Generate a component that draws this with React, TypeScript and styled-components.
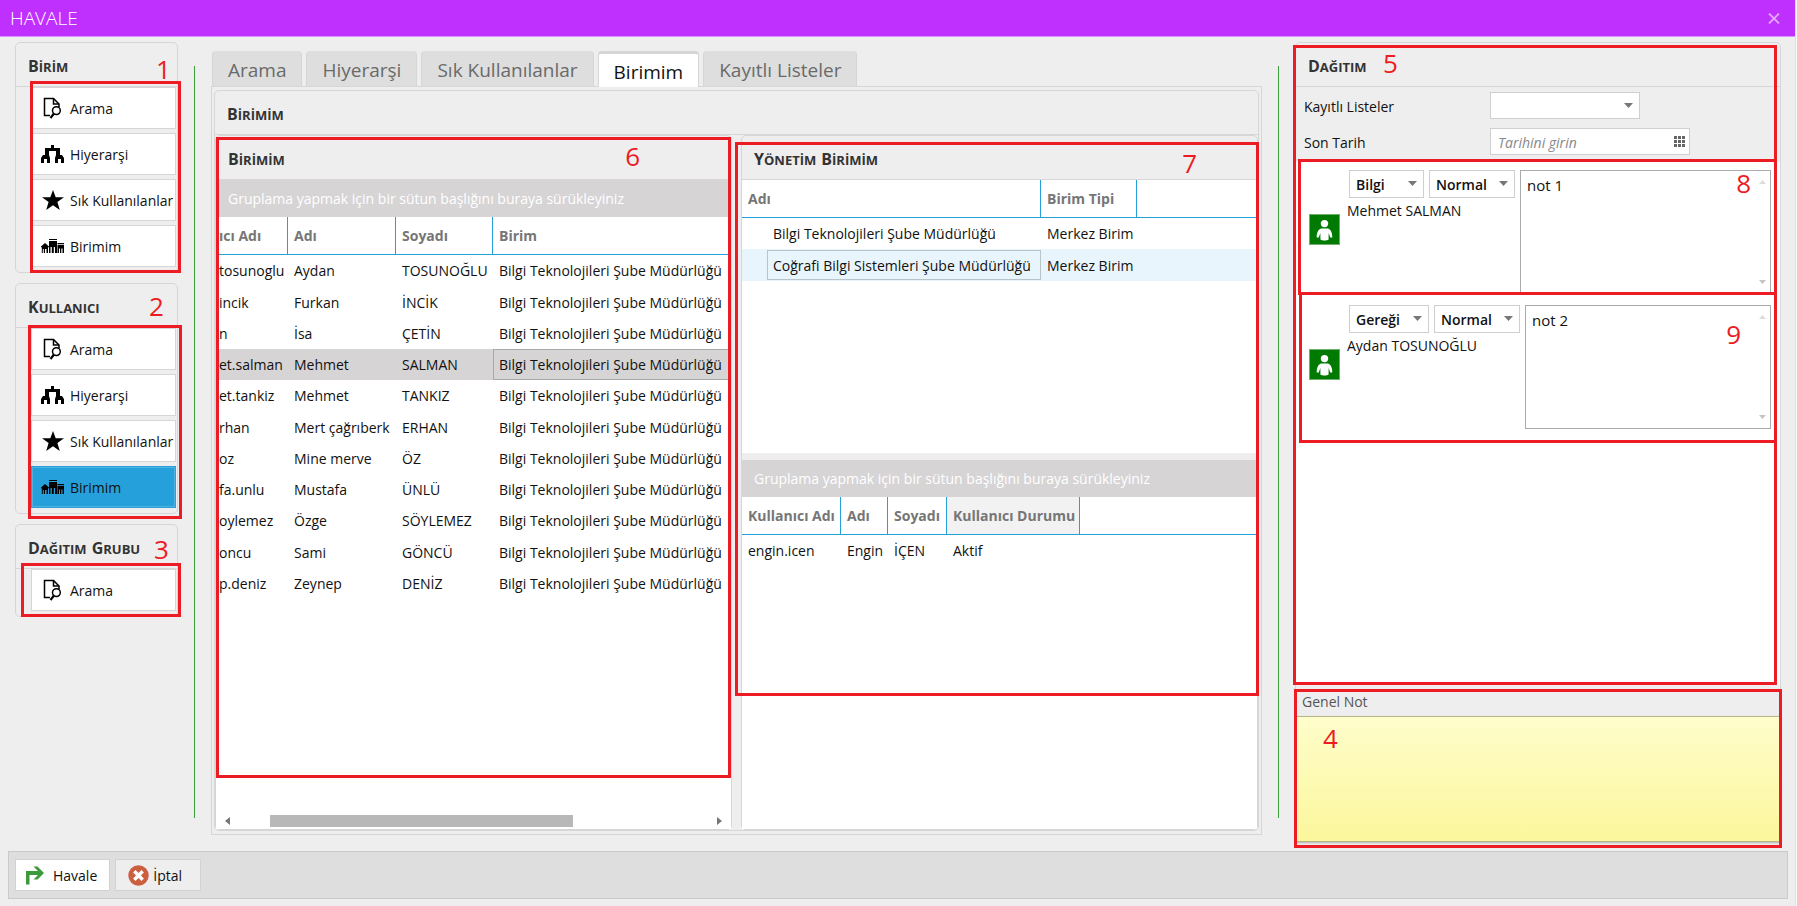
import React from 'react';
import styled, { createGlobalStyle } from 'styled-components';

const RED = '#ed1c24';
const LINE = '#d6d6d6';
const BLUE = '#26a0da';
const FONT = '"Open Sans", "Noto Sans", sans-serif';

const GlobalStyle = createGlobalStyle`
  *, *::before, *::after { box-sizing: border-box; }
  body { margin: 0; background: #fff; font-family: ${FONT}; font-size: 14px; color: #111; }
  button, input, select, textarea { font: inherit; color: inherit; margin: 0; border-radius: 0; }
`;

const Shell = styled.div`
  display: flex;
  min-height: 100vh;
`;

const WindowFrame = styled.div`
  flex: 1;
  min-width: 0;
  display: flex;
  flex-direction: column;
  background: #eeeeee;
`;

const DesktopEdge = styled.div`
  width: 2px;
  background: #fafafa;
  border-left: 1px solid #e0e0e0;
`;

const TitleBar = styled.header`
  display: flex;
  align-items: center;
  justify-content: space-between;
  height: 37px;
  padding: 0 15px 0 10px;
  background: #bf30ff;
  border-bottom: 1px solid #d795fb;
`;

const Title = styled.h1`
  margin: 0;
  font-size: 19px;
  font-weight: 300;
  color: #fff;
`;

const CloseButton = styled.button`
  display: flex;
  padding: 0;
  border: 0;
  background: none;
`;

const Main = styled.main`
  flex: 1;
  display: flex;
  padding: 0 14px 0 15px;
`;

const Divider = styled.div`
  width: 1px;
  margin: 29px 16px 33px;
  background: #3f9f3f;
`;

const Sidebar = styled.aside`
  width: 163px;
  padding-top: 5px;
  display: flex;
  flex-direction: column;
  gap: 10px;
`;

const Panel = styled.section<{ $grow?: boolean }>`
  position: relative;
  display: flex;
  flex-direction: column;
  min-width: 0;
  border: 1px solid ${LINE};
  border-radius: 5px;
  ${p => p.$grow && 'flex: 1;'}
`;

const TitleRow = styled.h2`
  flex: none;
  display: flex;
  align-items: center;
  gap: 5px;
  height: 44px;
  margin: 0;
  padding: 4px 12px 0;
  border-bottom: 1px solid ${LINE};
  font-size: 13px;
  line-height: 20px;
  font-weight: 700;
  white-space: nowrap;
  color: #333;
`;

const TitleWord = styled.span`
  display: block;
  text-transform: uppercase;
  &::first-letter { font-size: 16px; }
`;

const ButtonStack = styled.div`
  display: flex;
  flex-direction: column;
  gap: 4px;
  padding: 0 1px 5px 15px;
`;

const NavButton = styled.button<{ $active?: boolean }>`
  display: flex;
  align-items: center;
  height: 42px;
  padding: 0;
  border: 1px solid ${p => (p.$active ? BLUE : LINE)};
  background: ${p => (p.$active ? BLUE : '#fff')};
  box-shadow: ${p => (p.$active ? 'inset 0 0 0 1px #4fb2e2' : 'none')};
  white-space: nowrap;
`;

const NavIcon = styled.span`
  display: flex;
  justify-content: center;
  width: 23px;
  margin: 0 6px 0 9px;
`;

const CalloutBox = styled.div<{ $inset: string }>`
  position: absolute;
  z-index: 2;
  inset: ${p => p.$inset};
  border: 3px solid ${RED};
  pointer-events: none;
`;

const CalloutNumber = styled.span<{ $inset: string }>`
  position: absolute;
  z-index: 2;
  inset: ${p => p.$inset};
  font-size: 26px;
  line-height: 26px;
  color: ${RED};
  pointer-events: none;
`;

const Center = styled.div`
  flex: 1;
  min-width: 0;
  display: flex;
  flex-direction: column;
  padding: 14px 0 16px;
`;

const Tabs = styled.div`
  display: flex;
  gap: 4px;
  height: 35px;
  padding-left: 1px;
`;

const Tab = styled.button<{ $active?: boolean }>`
  position: relative;
  height: ${p => (p.$active ? '36px' : '35px')};
  padding: ${p => (p.$active ? '3px 15px 0' : '2px 15px 0')};
  border: 1px solid ${LINE};
  border-top: ${p => (p.$active ? '3px solid #d6d4d5' : '1px solid #dedede')};
  border-bottom: 0;
  border-radius: 4px 4px 0 0;
  background: ${p => (p.$active ? '#fff' : '#dedede')};
  color: ${p => (p.$active ? '#111' : '#6a6a6a')};
  font-size: 19px;
  line-height: 24px;
  white-space: nowrap;
`;

const TabBody = styled.div`
  flex: 1;
  display: flex;
  padding: 3px 2px;
  border: 1px solid ${LINE};
`;

const Split = styled.div`
  flex: 1;
  display: flex;
  gap: 9px;
`;

const GridPanel = styled(Panel)`
  flex: 517 1 0;
`;

const Surface = styled.div`
  flex: 1;
  display: flex;
  flex-direction: column;
  min-width: 0;
  background: #fff;
`;

const GroupBar = styled.div`
  display: flex;
  align-items: center;
  height: 37px;
  padding: 0 12px;
  background: #d6d4d5;
  color: #fff;
  white-space: nowrap;
`;

const Viewport = styled.div<{ $height?: number }>`
  overflow: hidden;
  ${p => (p.$height ? `height: ${p.$height}px;` : 'flex: 1;')}
`;

const Table = styled.table`
  width: 100%;
  border-collapse: separate;
  border-spacing: 0;
  table-layout: fixed;
  text-align: left;
  white-space: nowrap;
`;

const Th = styled.th<{ $plain?: boolean; $shaded?: boolean }>`
  height: 38px;
  padding: 0 0 0 6px;
  border-bottom: 1px solid ${BLUE};
  border-right: ${p => (p.$plain ? '0' : `1px solid ${BLUE}`)};
  background: ${p => (p.$shaded ? '#f2f2f2' : '#fff')};
  color: #767676;
  font-weight: 700;
`;

const Tr = styled.tr<{ $tint?: string }>`
  height: 31px;
  background: ${p => p.$tint || 'transparent'};
  &:nth-child(4n + 2) { height: 32px; }
`;

const Td = styled.td<{ $focus?: string }>`
  padding: 0 0 0 6px;
  box-shadow: ${p => (p.$focus ? `inset 0 0 0 1px ${p.$focus}` : 'none')};
`;

const ClippedTh = styled(Th)`
  padding-left: 3px;
`;

const ClippedTd = styled(Td)`
  padding-left: 3px;
`;

const TreeTd = styled(Td)<{ $boxed?: boolean }>`
  padding: 0 0 0 25px;
  height: 31px;
  span {
    display: flex;
    align-items: center;
    height: 30px;
    padding-left: 5px;
    border: 1px solid ${p => (p.$boxed ? '#b9c4ca' : 'transparent')};
  }
`;

const ScrollBar = styled.div`
  display: flex;
  align-items: center;
  height: 18px;
  padding: 0 9px;
  margin-bottom: -1px;
`;

const ScrollTrack = styled.div`
  flex: 1;
  display: flex;
  padding: 0 29% 0 8%;
`;

const ScrollThumb = styled.div`
  flex: 1;
  height: 12px;
  background: #b8b8b8;
`;

const Splitter = styled.div`
  height: 7px;
  background: #eee;
`;

const RightColumn = styled.div`
  width: 486px;
  display: flex;
  padding: 5px 0 8px;
`;

const Form = styled.div`
  display: grid;
  grid-template-columns: 186px 1fr;
  row-gap: 9px;
  padding: 5px 8px 7px;
  align-items: center;
`;

const FieldLabel = styled.label`
  line-height: 25px;
  padding-top: 2px;
`;

const SelectWrap = styled.span<{ $width: number }>`
  position: relative;
  display: flex;
  width: ${p => p.$width}px;
  svg { position: absolute; right: 7px; top: 11px; pointer-events: none; }
`;

const Select = styled.select<{ $bold?: boolean }>`
  appearance: none;
  width: 100%;
  height: ${p => (p.$bold ? '28px' : '27px')};
  padding: 0 6px;
  border: 1px solid #cfcfcf;
  background: #fff;
  outline: 0;
  font-weight: ${p => (p.$bold ? 600 : 400)};
`;

const DateField = styled.span`
  display: flex;
  align-items: center;
  width: 200px;
  height: 27px;
  padding-right: 4px;
  border: 1px solid #cfcfcf;
  background: #fff;
`;

const DateInput = styled.input`
  flex: 1;
  min-width: 0;
  padding: 2px 0 0 7px;
  border: 0;
  background: none;
  outline: 0;
  &::placeholder { color: #888; font-style: italic; opacity: 1; }
`;

const PlainIconButton = styled.button`
  display: flex;
  padding: 0;
  border: 0;
  background: none;
`;

const Recipients = styled.ul`
  flex: 1;
  margin: 0;
  padding: 0;
  list-style: none;
  background: #fff;
`;

const Recipient = styled.li`
  position: relative;
  display: flex;
  padding: 8px 9px 3px 13px;
`;

const Avatar = styled.span`
  display: flex;
  align-items: flex-end;
  justify-content: center;
  width: 31px;
  height: 31px;
  margin: 44px 9px 0 0;
  border: 1px solid #6fae6f;
  background: #007a00;
`;

const Selects = styled.div`
  display: flex;
  gap: 5px;
`;

const PersonName = styled.div`
  margin-left: -2px;
  line-height: 25px;
`;

const NoteWrap = styled.div`
  flex: 1;
  display: flex;
  position: relative;
  margin-left: 5px;
`;

const Note = styled.textarea`
  width: 100%;
  height: 124px;
  padding: 2px 6px;
  border: 1px solid #aaabae;
  background: #fff;
  outline: 0;
  resize: none;
  overflow: hidden;
  font-size: 15px;
  line-height: 24px;
`;

const NoteArrows = styled.span`
  position: absolute;
  top: 10px;
  right: 5px;
  bottom: 10px;
  display: flex;
  flex-direction: column;
  justify-content: space-between;
`;

const GeneralNote = styled.div`
  position: relative;
  display: flex;
  flex-direction: column;
`;

const GeneralLabel = styled.label`
  height: 31px;
  padding: 3px 6px 0;
  line-height: 28px;
  color: #555;
`;

const GeneralInput = styled.textarea`
  height: 126px;
  border: 1px solid #b9b78a;
  background: linear-gradient(#fffdcb, #fbf79c);
  box-shadow: 0 1px 2px #bbb;
  outline: 0;
  resize: none;
`;

const Footer = styled.footer`
  display: flex;
  gap: 5px;
  height: 48px;
  margin: 0 7px 7px 8px;
  padding: 7px 6px;
  border: 1px solid #cacaca;
  background: #dedede;
`;

const ActionButton = styled.button<{ $primary?: boolean }>`
  display: flex;
  align-items: center;
  gap: ${p => (p.$primary ? '9px' : '4px')};
  height: 32px;
  padding: ${p => (p.$primary ? '0 12px 0 10px' : '0 18px 0 12px')};
  border: 1px solid #d2d2d2;
  background: ${p => (p.$primary ? '#fff' : '#eee')};
`;

const SearchDocIcon = () => (
  <svg width="19" height="23" viewBox="0 0 19 23" fill="none" stroke="#000" strokeWidth="1.5">
    <path d="M7 18.5H1.5V1.5H10.5L16 7V10" />
    <path d="M10.5 1.5V7H16" />
    <circle cx="13.4" cy="13.6" r="3.9" />
    <path d="M10.8 16.8L7.5 21" strokeWidth="2.2" />
  </svg>
);

const HierarchyIcon = () => (
  <svg width="23" height="18" viewBox="0 0 23 18">
    <path d="M10 0H13V3H19V10H21L23 13V18H20V14H17V18H14V13L15 10V6H8V10L9 13V18H6V14H3V18H0V13L2 10H4V3H10Z" />
  </svg>
);

const StarIcon = () => (
  <svg width="22" height="20" viewBox="0 0 22 20">
    <path d="M11 0L13.7 7.3H22L15.4 12L17.8 20L11 15.2L4.2 20L6.6 12L0 7.3H8.3Z" />
  </svg>
);

const BuildingsIcon = () => (
  <svg width="23" height="14" viewBox="0 0 23 14">
    <path d="M0 7.5L4 4L8 7.5V8.5L7 8V14H5.5V10H4V14H2.8V10H1.8V14H0.8V8L0 8.5Z" />
    <path d="M8 0H16V1H8ZM8 2H16V14H14V8H12.8V14H10.8V8H9.5V14H8Z" />
    <path d="M16.5 4H23V5.2H16.5ZM16.5 6H23V14H21.5V9.5H20.3V14H19V9.5H18V14H16.5Z" />
  </svg>
);

const ForwardIcon = () => (
  <svg width="18" height="19" viewBox="0 0 18 19">
    <path d="M0 18.5V5H12L7.5 0.5H11.5L18 7L11.5 13.5H7.5L12 9H3.5V18.5Z" fill="#3d9a3a" />
  </svg>
);

const CancelIcon = () => (
  <svg width="21" height="21" viewBox="0 0 21 21">
    <circle cx="10.5" cy="10.5" r="10.2" fill="#cb5f3f" />
    <path d="M6.3 6.3L14.7 14.7M14.7 6.3L6.3 14.7" stroke="#fff" strokeWidth="3.4" />
  </svg>
);

const PersonIcon = () => (
  <svg width="17" height="25" viewBox="0 0 17 25" fill="#fff">
    <circle cx="8.5" cy="4.6" r="3.7" />
    <path d="M5 9.5H12C15 10.5 16.3 14 16.3 18.5H14.3L12.6 14V20.5C11 21.8 6 21.8 4.4 20.5V14L2.7 18.5H0.7C0.7 14 2 10.5 5 9.5Z" />
  </svg>
);

const DownArrow = () => (
  <svg width="9" height="5" viewBox="0 0 9 5"><path d="M0 0H9L4.5 5Z" fill="#777" /></svg>
);

const SmallArrow = ({ up }: { up?: boolean }) => (
  <svg width="7" height="4" viewBox="0 0 7 4">
    <path d={up ? 'M0 4H7L3.5 0Z' : 'M0 0H7L3.5 4Z'} fill={up ? '#dcdcdc' : '#c4c4c4'} />
  </svg>
);

const SideArrow = ({ left }: { left?: boolean }) => (
  <svg width="5" height="8" viewBox="0 0 5 8">
    <path d={left ? 'M5 0V8L0 4Z' : 'M0 0V8L5 4Z'} fill="#777" />
  </svg>
);

const CalendarGridIcon = () => (
  <svg width="11" height="11" viewBox="0 0 11 11" fill="#666">
    {[0, 4, 8].map(x => [0, 4, 8].map(y => <rect key={`${x}-${y}`} x={x} y={y} width="3" height="3" />))}
  </svg>
);

const PanelTitle = ({ children }: { children: string }) => (
  <TitleRow>
    {children.split(' ').map(word => <TitleWord key={word}>{word}</TitleWord>)}
  </TitleRow>
);

const NAV = [
  { label: 'Arama', icon: <SearchDocIcon /> },
  { label: 'Hiyerarşi', icon: <HierarchyIcon /> },
  { label: 'Sık Kullanılanlar', icon: <StarIcon /> },
  { label: 'Birimim', icon: <BuildingsIcon /> },
];

const SIDE_GROUPS = [
  { title: 'Birim', items: NAV, active: '', no: '1', box: '38px -4px -1px 14px', at: '13px auto auto 140px' },
  { title: 'Kullanıcı', items: NAV, active: 'Birimim', no: '2', box: '41px -5px -6px 12px', at: '9px auto auto 133px' },
  { title: 'Dağıtım Grubu', items: NAV.slice(0, 1), active: '', no: '3', box: '38px -4px -1px 5px', at: '11px auto auto 138px' },
];

const TABS = ['Arama', 'Hiyerarşi', 'Sık Kullanılanlar', 'Birimim', 'Kayıtlı Listeler'];
const GROUP_HINT = 'Gruplama yapmak için bir sütun başlığını buraya sürükleyiniz';
const UNIT = 'Bilgi Teknolojileri Şube Müdürlüğü';

const USERS = [
  ['tosunoglu', 'Aydan', 'TOSUNOĞLU'],
  ['incik', 'Furkan', 'İNCİK'],
  ['n', 'İsa', 'ÇETİN'],
  ['et.salman', 'Mehmet', 'SALMAN'],
  ['et.tankiz', 'Mehmet', 'TANKIZ'],
  ['rhan', 'Mert çağrıberk', 'ERHAN'],
  ['oz', 'Mine merve', 'ÖZ'],
  ['fa.unlu', 'Mustafa', 'ÜNLÜ'],
  ['oylemez', 'Özge', 'SÖYLEMEZ'],
  ['oncu', 'Sami', 'GÖNCÜ'],
  ['p.deniz', 'Zeynep', 'DENİZ'],
];
const SELECTED_USER = 3;

const RECIPIENTS = [
  { name: 'Mehmet SALMAN', kind: 'Bilgi', width: 75, note: 'not 1', no: '8', box: '-3px 3px 2px 2px', at: '8px 29px auto auto' },
  { name: 'Aydan TOSUNOĞLU', kind: 'Gereği', width: 80, note: 'not 2', no: '9', box: '-5px 3px -11px 3px', at: '24px 39px auto auto' },
];

export default function App() {
  return (
    <Shell lang="tr">
      <GlobalStyle />
      <WindowFrame>
        <TitleBar>
          <Title>HAVALE</Title>
          <CloseButton aria-label="Kapat">
            <svg width="12" height="11" viewBox="0 0 12 11" stroke="#e3a5ff" strokeWidth="1.8">
              <path d="M1 0.5L11 10.5M11 0.5L1 10.5" />
            </svg>
          </CloseButton>
        </TitleBar>

        <Main>
          <Sidebar>
            {SIDE_GROUPS.map(g => (
              <Panel key={g.title}>
                <PanelTitle>{g.title}</PanelTitle>
                <ButtonStack>
                  {g.items.map(item => (
                    <NavButton key={item.label} $active={item.label === g.active}>
                      <NavIcon>{item.icon}</NavIcon>
                      {item.label}
                    </NavButton>
                  ))}
                </ButtonStack>
                <CalloutBox $inset={g.box} />
                <CalloutNumber $inset={g.at}>{g.no}</CalloutNumber>
              </Panel>
            ))}
          </Sidebar>

          <Divider />

          <Center>
            <Tabs role="tablist">
              {TABS.map(t => (
                <Tab key={t} role="tab" aria-selected={t === 'Birimim'} $active={t === 'Birimim'}>{t}</Tab>
              ))}
            </Tabs>
            <TabBody>
              <Panel $grow>
                <PanelTitle>Birimim</PanelTitle>
                <Split>
                  <GridPanel>
                    <PanelTitle>Birimim</PanelTitle>
                    <Surface>
                      <GroupBar>{GROUP_HINT}</GroupBar>
                      <Viewport>
                        <Table>
                          <colgroup>
                            <col style={{ width: 72 }} />
                            <col style={{ width: 108 }} />
                            <col style={{ width: 97 }} />
                            <col />
                          </colgroup>
                          <thead>
                            <tr>
                              <ClippedTh>ıcı Adı</ClippedTh>
                              <Th>Adı</Th>
                              <Th>Soyadı</Th>
                              <Th $plain>Birim</Th>
                            </tr>
                          </thead>
                          <tbody>
                            {USERS.map(([login, first, last], i) => (
                              <Tr key={login} $tint={i === SELECTED_USER ? '#d6d4d5' : undefined}>
                                <ClippedTd>{login}</ClippedTd>
                                <Td>{first}</Td>
                                <Td>{last}</Td>
                                <Td $focus={i === SELECTED_USER ? '#a9a9a9' : undefined}>{UNIT}</Td>
                              </Tr>
                            ))}
                          </tbody>
                        </Table>
                      </Viewport>
                      <ScrollBar>
                        <SideArrow left />
                        <ScrollTrack><ScrollThumb /></ScrollTrack>
                        <SideArrow />
                      </ScrollBar>
                    </Surface>
                    <CalloutBox $inset="1px 0 51px 0" />
                    <CalloutNumber $inset="7px 91px auto auto">6</CalloutNumber>
                  </GridPanel>

                  <GridPanel>
                    <PanelTitle>Yönetim Birimim</PanelTitle>
                    <Surface>
                      <Viewport $height={273}>
                        <Table>
                          <colgroup>
                            <col style={{ width: 299 }} />
                            <col style={{ width: 96 }} />
                            <col />
                          </colgroup>
                          <thead>
                            <tr>
                              <Th>Adı</Th>
                              <Th>Birim Tipi</Th>
                              <Th $plain aria-hidden="true" />
                            </tr>
                          </thead>
                          <tbody>
                            <Tr>
                              <TreeTd><span>{UNIT}</span></TreeTd>
                              <Td>Merkez Birim</Td>
                              <Td />
                            </Tr>
                            <Tr $tint="#e9f5fc">
                              <TreeTd $boxed><span>Coğrafi Bilgi Sistemleri Şube Müdürlüğü</span></TreeTd>
                              <Td>Merkez Birim</Td>
                              <Td />
                            </Tr>
                          </tbody>
                        </Table>
                      </Viewport>
                      <Splitter />
                      <GroupBar>{GROUP_HINT}</GroupBar>
                      <Viewport>
                        <Table>
                          <colgroup>
                            <col style={{ width: 99 }} />
                            <col style={{ width: 47 }} />
                            <col style={{ width: 59 }} />
                            <col style={{ width: 133 }} />
                            <col />
                          </colgroup>
                          <thead>
                            <tr>
                              <Th>Kullanıcı Adı</Th>
                              <Th>Adı</Th>
                              <Th>Soyadı</Th>
                              <Th $shaded>Kullanıcı Durumu</Th>
                              <Th $plain aria-hidden="true" />
                            </tr>
                          </thead>
                          <tbody>
                            <Tr>
                              <Td>engin.icen</Td>
                              <Td>Engin</Td>
                              <Td>İÇEN</Td>
                              <Td>Aktif</Td>
                              <Td />
                            </Tr>
                          </tbody>
                        </Table>
                      </Viewport>
                    </Surface>
                    <CalloutBox $inset="6px -2px 133px -7px" />
                    <CalloutNumber $inset="14px 60px auto auto">7</CalloutNumber>
                  </GridPanel>
                </Split>
              </Panel>
            </TabBody>
          </Center>

          <Divider />

          <RightColumn>
            <Panel $grow>
              <PanelTitle>Dağıtım</PanelTitle>
              <Form>
                <FieldLabel htmlFor="lists">Kayıtlı Listeler</FieldLabel>
                <SelectWrap $width={150}>
                  <Select id="lists" defaultValue=""><option value="" /></Select>
                  <DownArrow />
                </SelectWrap>
                <FieldLabel htmlFor="due">Son Tarih</FieldLabel>
                <DateField>
                  <DateInput id="due" placeholder="Tarihini girin" />
                  <PlainIconButton aria-label="Takvim"><CalendarGridIcon /></PlainIconButton>
                </DateField>
              </Form>
              <Recipients>
                {RECIPIENTS.map(r => (
                  <Recipient key={r.name}>
                    <Avatar><PersonIcon /></Avatar>
                    <div>
                      <Selects>
                        <SelectWrap $width={r.width}>
                          <Select $bold aria-label="Tür" defaultValue={r.kind}><option>{r.kind}</option></Select>
                          <DownArrow />
                        </SelectWrap>
                        <SelectWrap $width={86}>
                          <Select $bold aria-label="Öncelik" defaultValue="Normal"><option>Normal</option></Select>
                          <DownArrow />
                        </SelectWrap>
                      </Selects>
                      <PersonName>{r.name}</PersonName>
                    </div>
                    <NoteWrap>
                      <Note aria-label="Not" defaultValue={r.note} />
                      <NoteArrows><SmallArrow up /><SmallArrow /></NoteArrows>
                    </NoteWrap>
                    <CalloutBox $inset={r.box} />
                    <CalloutNumber $inset={r.at}>{r.no}</CalloutNumber>
                  </Recipient>
                ))}
              </Recipients>
              <GeneralNote>
                <GeneralLabel htmlFor="general">Genel Not</GeneralLabel>
                <GeneralInput id="general" />
                <CalloutBox $inset="4px -2px -6px -2px" />
                <CalloutNumber $inset="40px auto auto 27px">4</CalloutNumber>
              </GeneralNote>
              <CalloutBox $inset="2px 3px 157px -3px" />
              <CalloutNumber $inset="7px auto auto 87px">5</CalloutNumber>
            </Panel>
          </RightColumn>
        </Main>

        <Footer>
          <ActionButton $primary><ForwardIcon />Havale</ActionButton>
          <ActionButton><CancelIcon />İptal</ActionButton>
        </Footer>
      </WindowFrame>
      <DesktopEdge />
    </Shell>
  );
}
